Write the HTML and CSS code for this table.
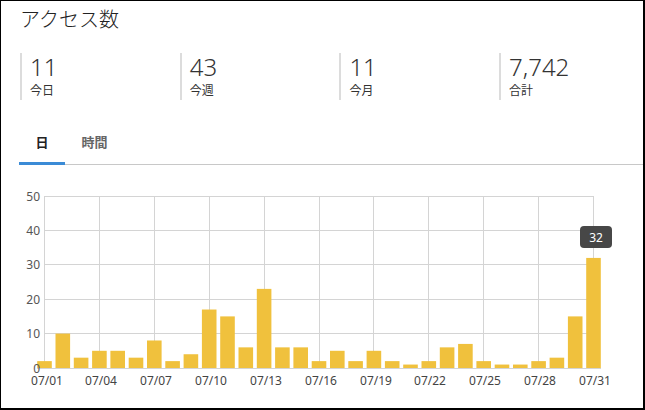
FILE: index.html
```html
<!DOCTYPE html>
<html lang="ja">
<head>
<meta charset="utf-8">
<link rel="stylesheet" href="styles.css">
</head>
<body>
<div class="card">
  <h1 class="title">アクセス数</h1>
  <div class="stats">
    <div class="stat"><div class="num">11</div><div class="lbl">今日</div></div>
    <div class="stat"><div class="num">43</div><div class="lbl">今週</div></div>
    <div class="stat"><div class="num">11</div><div class="lbl">今月</div></div>
    <div class="stat"><div class="num">7,742</div><div class="lbl">合計</div></div>
  </div>
  <div class="tabs">
    <div class="tab active">日</div>
    <div class="tab">時間</div>
  </div>
  <svg class="chart" width="642" height="243" viewBox="1 165 642 243">
    <g class="grid">
      <line x1="44.5" y1="196.5" x2="593.5" y2="196.5"/>
      <line x1="44.5" y1="230.5" x2="593.5" y2="230.5"/>
      <line x1="44.5" y1="264.5" x2="593.5" y2="264.5"/>
      <line x1="44.5" y1="299.5" x2="593.5" y2="299.5"/>
      <line x1="44.5" y1="333.5" x2="593.5" y2="333.5"/>
      <line x1="44.5" y1="196" x2="44.5" y2="368"/>
      <line x1="99.5" y1="196" x2="99.5" y2="368"/>
      <line x1="154.5" y1="196" x2="154.5" y2="368"/>
      <line x1="209.5" y1="196" x2="209.5" y2="368"/>
      <line x1="264.5" y1="196" x2="264.5" y2="368"/>
      <line x1="319.5" y1="196" x2="319.5" y2="368"/>
      <line x1="373.5" y1="196" x2="373.5" y2="368"/>
      <line x1="428.5" y1="196" x2="428.5" y2="368"/>
      <line x1="483.5" y1="196" x2="483.5" y2="368"/>
      <line x1="538.5" y1="196" x2="538.5" y2="368"/>
      <line x1="593.5" y1="196" x2="593.5" y2="368"/>
      <line x1="37" y1="368.5" x2="601" y2="368.5"/>
    </g>
    <g class="bars">
      <rect x="37.2" y="361.12" width="14.6" height="6.88"/>
      <rect x="55.5" y="333.6" width="14.6" height="34.4"/>
      <rect x="73.8" y="357.68" width="14.6" height="10.32"/>
      <rect x="92.1" y="350.8" width="14.6" height="17.2"/>
      <rect x="110.4" y="350.8" width="14.6" height="17.2"/>
      <rect x="128.7" y="357.68" width="14.6" height="10.32"/>
      <rect x="147" y="340.48" width="14.6" height="27.52"/>
      <rect x="165.3" y="361.12" width="14.6" height="6.88"/>
      <rect x="183.6" y="354.24" width="14.6" height="13.76"/>
      <rect x="201.9" y="309.52" width="14.6" height="58.48"/>
      <rect x="220.2" y="316.4" width="14.6" height="51.6"/>
      <rect x="238.5" y="347.36" width="14.6" height="20.64"/>
      <rect x="256.8" y="288.88" width="14.6" height="79.12"/>
      <rect x="275.1" y="347.36" width="14.6" height="20.64"/>
      <rect x="293.4" y="347.36" width="14.6" height="20.64"/>
      <rect x="311.7" y="361.12" width="14.6" height="6.88"/>
      <rect x="330" y="350.8" width="14.6" height="17.2"/>
      <rect x="348.3" y="361.12" width="14.6" height="6.88"/>
      <rect x="366.6" y="350.8" width="14.6" height="17.2"/>
      <rect x="384.9" y="361.12" width="14.6" height="6.88"/>
      <rect x="403.2" y="364.56" width="14.6" height="3.44"/>
      <rect x="421.5" y="361.12" width="14.6" height="6.88"/>
      <rect x="439.8" y="347.36" width="14.6" height="20.64"/>
      <rect x="458.1" y="343.92" width="14.6" height="24.08"/>
      <rect x="476.4" y="361.12" width="14.6" height="6.88"/>
      <rect x="494.7" y="364.56" width="14.6" height="3.44"/>
      <rect x="513" y="364.56" width="14.6" height="3.44"/>
      <rect x="531.3" y="361.12" width="14.6" height="6.88"/>
      <rect x="549.6" y="357.68" width="14.6" height="10.32"/>
      <rect x="567.9" y="316.4" width="14.6" height="51.6"/>
      <rect x="586.2" y="257.92" width="14.6" height="110.08"/>
    </g>
    <g class="ylabels">
      <text x="40" y="201">50</text>
      <text x="40" y="235">40</text>
      <text x="40" y="269">30</text>
      <text x="40" y="304">20</text>
      <text x="40" y="338">10</text>
      <text x="40" y="373">0</text>
    </g>
    <g class="xlabels">
      <text x="47" y="385">07/01</text>
      <text x="101" y="385">07/04</text>
      <text x="156" y="385">07/07</text>
      <text x="211" y="385">07/10</text>
      <text x="266" y="385">07/13</text>
      <text x="321" y="385">07/16</text>
      <text x="376" y="385">07/19</text>
      <text x="430" y="385">07/22</text>
      <text x="485" y="385">07/25</text>
      <text x="540" y="385">07/28</text>
      <text x="595" y="385">07/31</text>
    </g>
    <g class="tooltip">
      <rect x="580" y="226" width="32" height="22" rx="4" ry="4"/>
      <text x="596" y="241.5">32</text>
    </g>
  </svg>
</div>
</body>
</html>
```

FILE: styles.css
```css
* { box-sizing: border-box; }
html, body { margin: 0; padding: 0; background: #fff; }
body {
  font-family: "Noto Sans", "Noto Sans CJK JP", sans-serif;
  color: #333;
}
.card {
  width: 645px;
  height: 410px;
  border-style: solid;
  border-color: #000;
  border-width: 1px 2px 2px 1px;
  overflow: hidden;
  background: #fff;
}
.title {
  margin: 5px 0 0 19px;
  font-size: 20px;
  line-height: 28px;
  font-weight: 300;
  color: #222;
}
.stats {
  display: grid;
  grid-template-columns: repeat(4, 159.7px);
  margin: 19px 0 0 19px;
}
.stat {
  border-left: 2px solid #dcdcdc;
  padding-left: 8px;
}
.num {
  font-size: 24px;
  line-height: 28px;
  font-weight: 300;
  color: #333;
}
.lbl {
  font-size: 12px;
  line-height: 19px;
  color: #333;
}
.tabs {
  display: flex;
  margin: 22px 0 0 18px;
  border-bottom: 1px solid #c8c8c8;
}
.tab {
  padding: 10px 16.5px 10px;
  font-size: 13px;
  line-height: 20px;
  font-weight: 700;
  color: #666;
  border-bottom: 3px solid transparent;
  margin-bottom: -1px;
}
.tab.active {
  color: #222;
  border-bottom-color: #3b8bd6;
}
.chart { display: block; }
.grid line { stroke: #d4d4d4; stroke-width: 1; }
.bars rect { fill: #f0c13d; }
.ylabels text {
  text-anchor: end;
  font-size: 12px;
  fill: #555;
  font-family: "Noto Sans", sans-serif;
}
.xlabels text {
  text-anchor: middle;
  font-size: 12px;
  fill: #444;
  font-family: "Noto Sans", sans-serif;
}
.tooltip rect { fill: #474747; }
.tooltip text {
  text-anchor: middle;
  font-size: 12px;
  fill: #fff;
  font-family: "Noto Sans", sans-serif;
}
```
